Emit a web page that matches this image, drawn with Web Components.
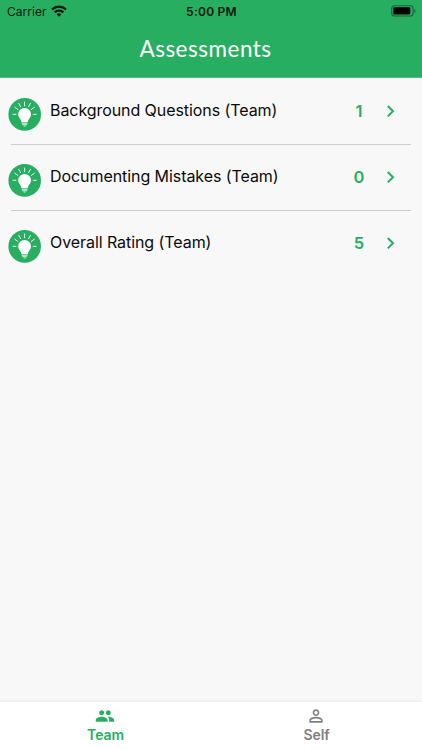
<!DOCTYPE html>
<html lang="en">
<head>
<meta charset="utf-8">
<title>Assessments</title>
<style>
  html, body {
    margin: 0;
    height: 100%;
  }

  body {
    --green: #28ae61;
    --page: #f8f8f8;
    font-family: Inter, "Liberation Sans", sans-serif;
    overflow: hidden;
  }
</style>
</head>
<body>
<app-screen>
  <status-bar slot="header" carrier="Carrier" time="5:00 PM"></status-bar>
  <nav-title slot="header">Assessments</nav-title>
  <assessment-row count="1">Background Questions (Team)</assessment-row>
  <assessment-row count="0">Documenting Mistakes (Team)</assessment-row>
  <assessment-row count="5">Overall Rating (Team)</assessment-row>
  <tab-item slot="tabs" icon="group" active>Team</tab-item>
  <tab-item slot="tabs" icon="person">Self</tab-item>
</app-screen>

<script>
const TAB_ICONS = {
  group: "M16 11c1.66 0 2.99-1.34 2.99-3S17.66 5 16 5s-3 1.34-3 3 1.34 3 3 3zm-8 0c1.66 0 2.99-1.34 2.99-3S9.66 5 8 5 5 6.34 5 8s1.34 3 3 3zm0 2c-2.33 0-7 1.17-7 3.5V19h14v-2.5c0-2.33-4.67-3.5-7-3.5zm8 0c-.29 0-.62.02-.97.05 1.16.84 1.97 1.97 1.97 3.45V19h6v-2.5c0-2.33-4.67-3.5-7-3.5z",
  person: "M12 5.900a2.100 2.100 0 1 1 0 4.200 2.100 2.100 0 0 1 0-4.200m0 9c2.970 0 6.100 1.460 6.100 2.100v1.100H5.900V17c0-.64 3.130-2.100 6.100-2.100M12 4C9.790 4 8 5.790 8 8s1.790 4 4 4 4-1.790 4-4-1.790-4-4-4zm0 9c-2.670 0-8 1.340-8 4v3h16v-3c0-2.660-5.330-4-8-4z",
};

class AppScreen extends HTMLElement {
  constructor() {
    super();
    this.attachShadow({ mode: "open" }).innerHTML = `
      <style>
        :host {
          display: flex;
          flex-direction: column;
          height: 100vh;
          background: var(--page);
        }

        header {
          flex: 0 0 78px;
          box-sizing: border-box;
          background: var(--green);
          border-bottom: 1px solid #56b982;
        }

        main {
          flex: 1;
        }

        nav {
          display: flex;
          height: 48px;
          background: #fff;
          box-shadow: 0 -1px 4px rgba(0, 0, 0, 0.06);
        }
      </style>
      <header><slot name="header"></slot></header>
      <main><slot></slot></main>
      <nav><slot name="tabs"></slot></nav>
    `;
  }
}

class StatusBar extends HTMLElement {
  constructor() {
    super();
    this.attachShadow({ mode: "open" }).innerHTML = `
      <style>
        :host {
          display: grid;
          grid-template-columns: 1fr auto 1fr;
          align-items: center;
          height: 22px;
          padding: 0 6px 0 7px;
          color: #06190d;
          font-size: 12px;
        }

        .left {
          display: flex;
          align-items: center;
          gap: 4px;
          letter-spacing: 0.05px;
        }

        .time {
          font-weight: 600;
          letter-spacing: 0.25px;
        }

        .battery {
          justify-self: end;
        }

        svg {
          display: block;
        }
      </style>
      <div class="left">
        <span class="carrier"></span>
        <svg width="16" height="12" viewBox="0 0 16 12" fill="none" stroke="#06190d" stroke-width="2.300">
          <path d="M1 4.500C5 .7 11 .7 15 4.500M3.700 7.300c2.500-2.300 6.100-2.300 8.600 0"/>
          <path d="M8 11.700 5.600 9.300c1.400-1.300 3.400-1.300 4.800 0z" fill="#06190d" stroke="none"/>
        </svg>
      </div>
      <span class="time"></span>
      <svg class="battery" width="25" height="12" viewBox="0 0 25 12">
        <rect x=".7" y=".7" width="21.300" height="10.300" rx="2.800" fill="none" stroke="#176438" stroke-width="1.100"/>
        <rect x="2.300" y="2.300" width="17" height="7.200" rx="1.300" fill="#000"/>
        <path d="M23.200 4v4c1.700-.7 1.700-3.300 0-4z" fill="#176438"/>
      </svg>
    `;
  }

  connectedCallback() {
    this.shadowRoot.querySelector(".carrier").textContent = this.getAttribute("carrier");
    this.shadowRoot.querySelector(".time").textContent = this.getAttribute("time");
  }
}

class NavTitle extends HTMLElement {
  constructor() {
    super();
    this.attachShadow({ mode: "open" }).innerHTML = `
      <style>
        :host {
          display: block;
          height: 54px;
          padding-right: 11px;
          line-height: 53px;
          text-align: center;
          color: #fff;
          font-family: Lato, "Open Sans", sans-serif;
          font-size: 22.500px;
          letter-spacing: 0.5px;
        }
      </style>
      <slot></slot>
    `;
  }
}

class AssessmentRow extends HTMLElement {
  constructor() {
    super();
    this.attachShadow({ mode: "open" }).innerHTML = `
      <style>
        :host {
          display: block;
          height: 66px;
        }

        .row {
          display: grid;
          grid-template-columns: 33px 1fr 30px 14px;
          height: 66px;
          padding: 0 34px 0 8px;
        }

        .bulb {
          margin-top: 20px;
        }

        .name {
          margin: 20px 0 0 9px;
          font-size: 16px;
          line-height: 24px;
          letter-spacing: -0.07px;
          color: #0b0b0b;
        }

        .count {
          margin-top: 21px;
          font-size: 16.500px;
          font-weight: 600;
          line-height: 24px;
          text-align: center;
          color: var(--green);
        }

        .chevron {
          margin: 26px 0 0 12px;
        }

        svg {
          display: block;
        }

        .line {
          height: 1px;
          margin: 0 11px;
          background: #cdcdcd;
        }

        :host(:last-of-type) .line {
          display: none;
        }
      </style>
      <div class="row">
        <svg class="bulb" width="33" height="33" viewBox="0 0 33 33">
          <circle cx="16.700" cy="16.400" r="16.300" fill="#28ae61"/>
          <g stroke="#fff" stroke-linecap="round">
            <path d="M16.600 4v3.800M10.800 5.400l1.800 3.300M22.400 5.400l-1.800 3.300M6.800 9.200l3.200 2.300M26.400 9.200l-3.200 2.300M5 16.300h3M25.200 16.300h3" stroke-width=".9"/>
          </g>
          <path d="M16.600 9.900a6.400 6.400 0 0 0-6.400 6.400c0 2.500 1.300 3.500 2.300 5.100.7 1.100.7 2.400 1.200 2.800h5.800c.5-.4.500-1.700 1.200-2.800 1-1.600 2.300-2.600 2.300-5.100a6.400 6.400 0 0 0-6.400-6.400z" fill="#fff"/>
          <path d="M13.700 25.300h5.800M14.200 26.700h4.800M15.600 28h2" stroke="#fff" stroke-width=".8"/>
        </svg>
        <div class="name"><slot></slot></div>
        <div class="count"></div>
        <svg class="chevron" width="10" height="14" viewBox="0 0 10 14">
          <path d="m1.800 2 5.200 5.200-5.200 5.200" fill="none" stroke="#28ae61" stroke-width="2"/>
        </svg>
      </div>
      <div class="line"></div>
    `;
  }

  connectedCallback() {
    this.shadowRoot.querySelector(".count").textContent = this.getAttribute("count");
  }
}

class TabItem extends HTMLElement {
  constructor() {
    super();
    this.attachShadow({ mode: "open" }).innerHTML = `
      <style>
        :host {
          display: flex;
          flex: 1;
          flex-direction: column;
          align-items: center;
          color: #808080;
          font-size: 14px;
          font-weight: 600;
          line-height: 18px;
          letter-spacing: -0.1px;
        }

        :host([active]) {
          color: var(--green);
        }

        svg {
          display: block;
          margin: 4px 1px 0 0;
          fill: currentColor;
        }
      </style>
      <svg width="20" height="20" viewBox="0 0 24 24"><path/></svg>
      <span><slot></slot></span>
    `;
  }

  connectedCallback() {
    this.shadowRoot.querySelector("path").setAttribute("d", TAB_ICONS[this.getAttribute("icon")]);
  }
}

customElements.define("app-screen", AppScreen);
customElements.define("status-bar", StatusBar);
customElements.define("nav-title", NavTitle);
customElements.define("assessment-row", AssessmentRow);
customElements.define("tab-item", TabItem);
</script>
</body>
</html>
